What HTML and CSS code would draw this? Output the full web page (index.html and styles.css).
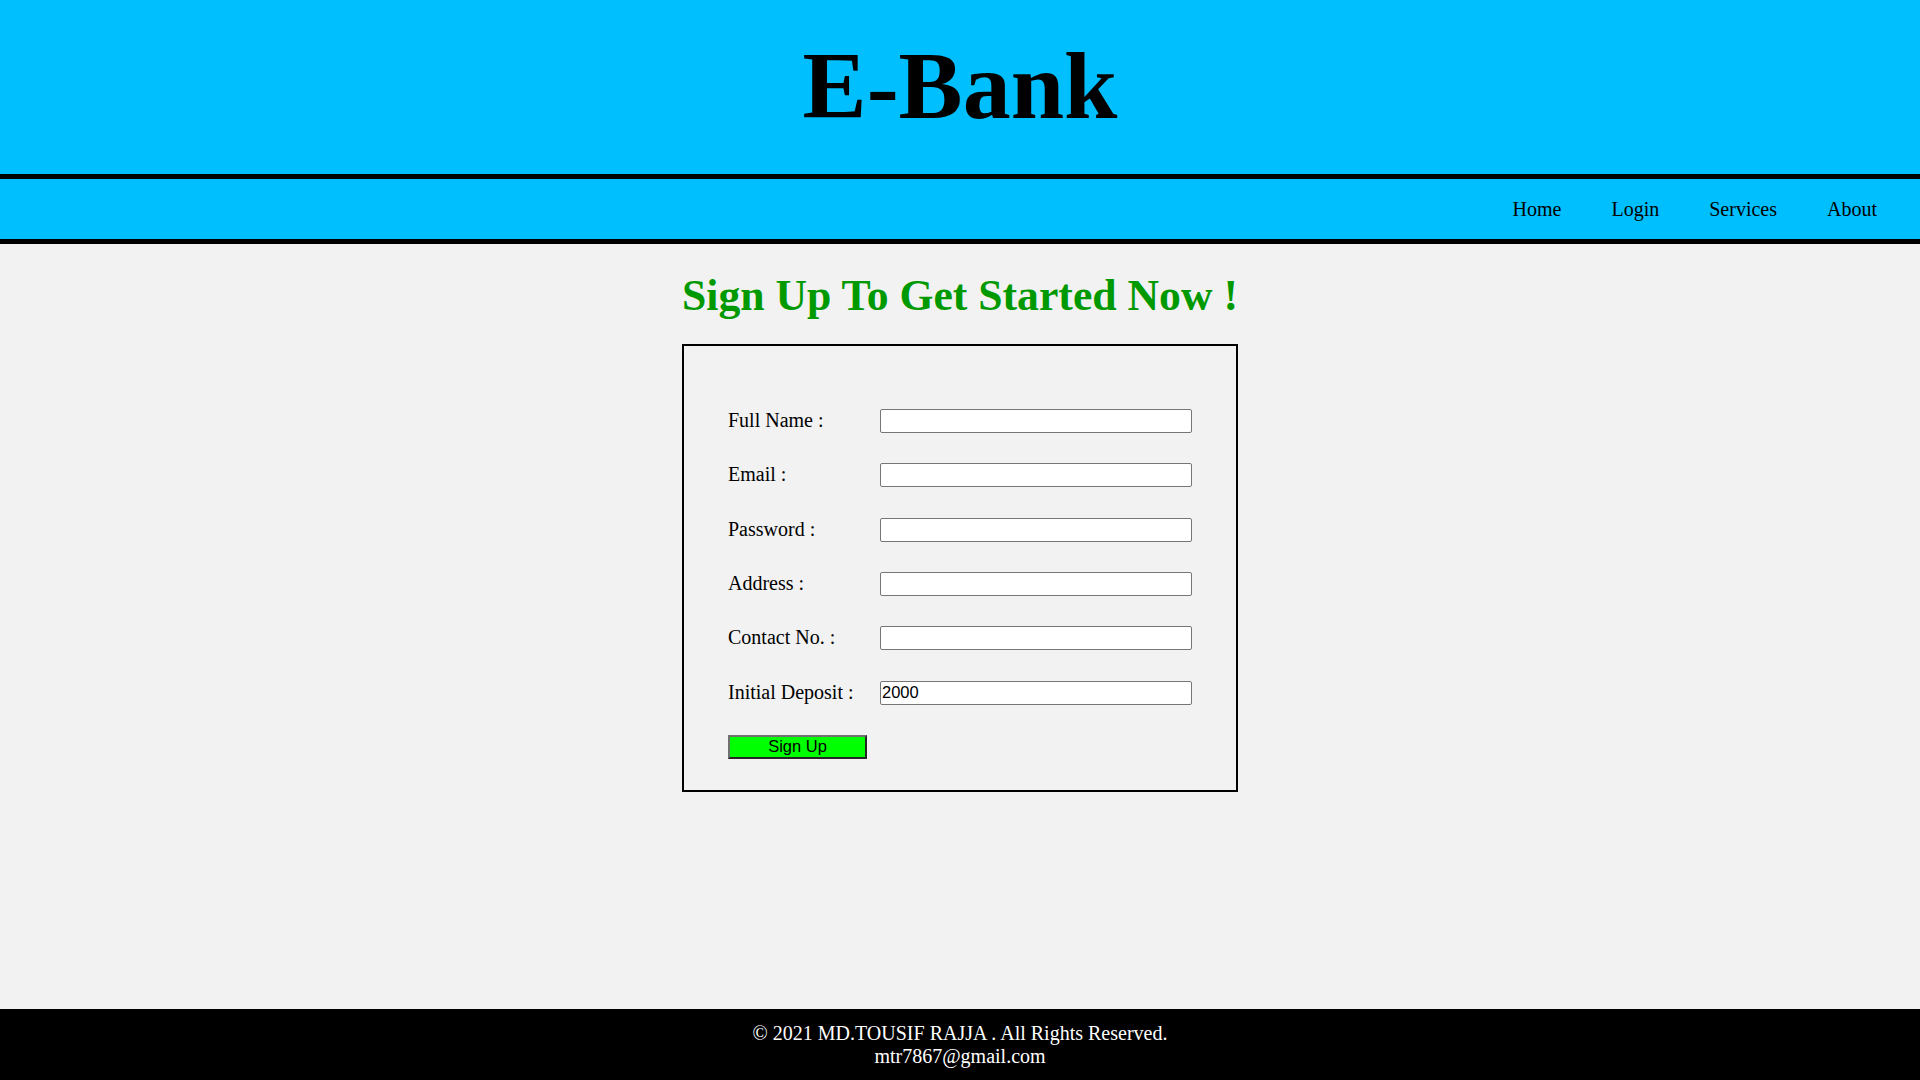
FILE: index.html
```html
<!DOCTYPE html>
<html lang="en">
<head>
<meta charset="utf-8">
<title>E-Bank - Sign Up</title>
<link rel="stylesheet" href="styles.css">
</head>
<body>
<header class="site-header">
  <h1 class="brand">E-Bank</h1>
</header>
<nav class="site-nav">
  <ul class="nav-list">
    <li><a href="#">Home</a></li>
    <li><a href="#">Login</a></li>
    <li><a href="#">Services</a></li>
    <li><a href="#">About</a></li>
  </ul>
</nav>
<main class="content">
  <h2 class="page-title">Sign Up To Get Started Now !</h2>
  <form class="signup-box">
    <div class="form-grid">
      <label class="field-label">Full Name :</label>
      <input class="field-input" type="text">
      <label class="field-label">Email :</label>
      <input class="field-input" type="text">
      <label class="field-label">Password :</label>
      <input class="field-input" type="password">
      <label class="field-label">Address :</label>
      <input class="field-input" type="text">
      <label class="field-label">Contact No. :</label>
      <input class="field-input" type="text">
      <label class="field-label">Initial Deposit :</label>
      <input class="field-input" type="text" value="2000">
      <button class="signup-btn" type="button">Sign Up</button>
    </div>
  </form>
</main>
<footer class="site-footer">
  <p class="footer-line">© 2021 MD.TOUSIF RAJJA . All Rights Reserved.</p>
  <p class="footer-line">mtr7867@gmail.com</p>
</footer>
</body>
</html>
```
FILE: styles.css
```css
* { box-sizing: border-box; }

html, body {
  margin: 0;
  padding: 0;
}

body {
  font-family: "Liberation Serif", "Times New Roman", serif;
  min-height: 100vh;
  display: flex;
  flex-direction: column;
  background: #f2f2f2;
  color: #000;
}

.site-header {
  background: #00bfff;
  border-bottom: 5px solid #000;
  padding: 31px 0 33px;
  height: 179px;
}

.brand {
  margin: 0;
  text-align: center;
  font-size: 96px;
  line-height: 110px;
  font-weight: bold;
}

.site-nav {
  background: #00bfff;
  border-bottom: 5px solid #000;
  height: 65px;
  display: flex;
  align-items: center;
  justify-content: flex-end;
  padding-right: 43px;
}

.nav-list {
  list-style: none;
  margin: 0;
  padding: 0;
  display: flex;
  gap: 50px;
}

.nav-list a {
  color: #000;
  text-decoration: none;
  font-size: 20px;
  line-height: 23px;
}

.content {
  flex: 1;
  background: #f2f2f2;
  padding-top: 26px;
}

.page-title {
  margin: 0 0 24px;
  text-align: center;
  color: #009900;
  font-size: 43.7px;
  line-height: 50px;
  font-weight: bold;
}

.signup-box {
  width: 556px;
  margin: 0 auto;
  border: 2px solid #000;
  padding: 63px 44px 31px;
}

.form-grid {
  display: grid;
  grid-template-columns: 152px 312px;
  grid-auto-rows: 24px;
  row-gap: 30.33px;
}

.field-label {
  font-size: 20px;
  line-height: 23px;
  align-self: start;
}

.field-input {
  width: 312px;
  height: 24px;
  border: 1px solid #767676;
  border-radius: 2px;
  padding: 1px 1px;
  background: #fff;
  font-family: "Liberation Sans", Arial, sans-serif;
  font-size: 16.5px;
  color: #000;
}

.signup-btn {
  width: 139px;
  height: 24px;
  background: #00ff00;
  border-style: solid;
  border-width: 2px;
  border-color: #707070 #262626 #262626 #707070;
  font-family: "Liberation Sans", Arial, sans-serif;
  font-size: 16.5px;
  color: #000;
  padding: 0 0 2px;
  line-height: 18px;
}

.site-footer {
  background: #000;
  color: #fff;
  text-align: center;
  padding: 13px 0 12px;
}

.footer-line {
  margin: 0;
  font-size: 20px;
  line-height: 23px;
}
```
